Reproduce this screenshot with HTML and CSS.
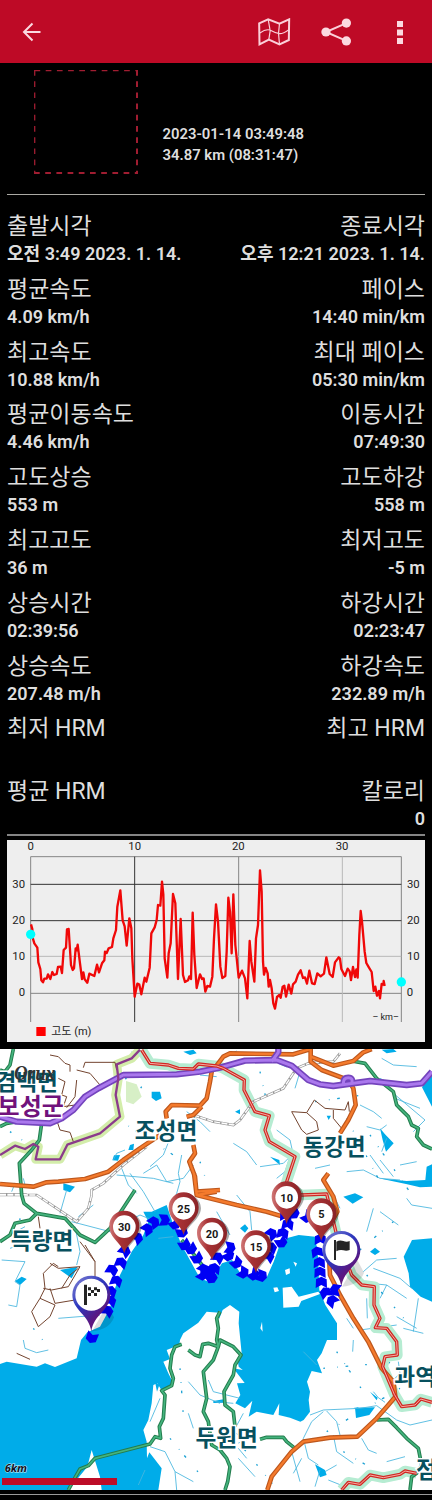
FILE: index.html
```html
<!DOCTYPE html>
<html lang="ko">
<head>
<meta charset="utf-8">
<title>Track statistics</title>
<link rel="stylesheet" href="styles.css">
</head>
<body>
<header class="bar">
  <svg class="back" viewBox="0 0 20 20"><path d="M18.5 10H2M10.500 1.500L2 10l8.500 8.500"/></svg>
  <div class="actions">
    <svg class="map-icon" viewBox="774 52 98 84"><path d="M777 68L804 56L838 69L867 56L866 118L838 131L806 117L778 131Z"/><path class="thin" d="M804 56L810 90L806 117M838 69L835 98L838 131M779 97Q800 82 814 90T838 99T866 87"/></svg>
    <svg class="share-icon" viewBox="962 52 94 84"><path d="M1039 67L977 94L1039 121"/><circle cx="977" cy="94" r="14"/><circle cx="1039" cy="67" r="14"/><circle cx="1039" cy="121" r="14"/></svg>
    <svg class="more-icon" viewBox="0 0 6 24"><path d="M0 1h6v6H0zM0 9.500h6v6H0zM0 18h6v6H0z"/></svg>
  </div>
</header>
<section class="summary">
  <svg class="thumb" viewBox="0 0 104 104"><path d="M.5 .7H103"/><path d="M.7 0V103.500"/><path class="heavy" d="M103 0V104"/><path class="heavy" d="M0 103H104"/></svg>
  <div class="meta"><div>2023-01-14 03:49:48</div><div>34.87 km (08:31:47)</div></div>
</section>
<main class="stats">
  <div class="row"><div><h2>출발시각</h2><p>오전 3:49 2023. 1. 14.</p></div><div><h2>종료시각</h2><p>오후 12:21 2023. 1. 14.</p></div></div>
  <div class="row"><div><h2>평균속도</h2><p>4.09 km/h</p></div><div><h2>페이스</h2><p>14:40 min/km</p></div></div>
  <div class="row"><div><h2>최고속도</h2><p>10.88 km/h</p></div><div><h2>최대 페이스</h2><p>05:30 min/km</p></div></div>
  <div class="row"><div><h2>평균이동속도</h2><p>4.46 km/h</p></div><div><h2>이동시간</h2><p>07:49:30</p></div></div>
  <div class="row"><div><h2>고도상승</h2><p>553 m</p></div><div><h2>고도하강</h2><p>558 m</p></div></div>
  <div class="row"><div><h2>최고고도</h2><p>36 m</p></div><div><h2>최저고도</h2><p>-5 m</p></div></div>
  <div class="row"><div><h2>상승시간</h2><p>02:39:56</p></div><div><h2>하강시간</h2><p>02:23:47</p></div></div>
  <div class="row"><div><h2>상승속도</h2><p>207.48 m/h</p></div><div><h2>하강속도</h2><p>232.89 m/h</p></div></div>
  <div class="row"><div><h2>최저 HRM</h2></div><div><h2>최고 HRM</h2></div></div>
  <div class="row"><div><h2>평균 HRM</h2></div><div><h2>칼로리</h2><p>0</p></div></div>
</main>
<svg class="chart" viewBox="21 15 1254 606">
  <g class="grid">
    <path class="soft" d="M92 65H1204M92 65V561M1204 65V561M92 475H1204M716 65V561"/>
    <path class="faint" d="M92 364H1204M1027 65V561"/>
    <path class="dark" d="M92 148H1204M92 257H1204M404 65V561"/>
  </g>
  <path class="elev" d="M93 268L97 282L97 305L103 325L112 338L115 382L121 402L124 436L129 442L133 431L140 431L144 418L151 432L157 411L162 420L170 417L174 396L182 395L186 414L191 345L198 338L201 283L206 282L213 390L218 405L222 400L227 340L230 346L233 329L240 385L246 432L250 412L254 433L262 443L268 416L283 423L291 389L297 412L306 385L313 376L315 350L320 354L326 340L336 336L340 310L348 285L352 215L361 166L368 256L374 274L380 332L388 250L394 280L397 370L404 485L412 446L418 449L424 478L434 428L439 440L449 398L454 295L464 277L470 255L474 210L481 212L486 140L490 178L494 370L502 428L506 355L512 325L519 177L526 205L534 432L542 252L549 420L555 441L564 436L568 424L573 432L578 233L583 360L590 459L600 418L606 432L611 430L616 470L622 453L630 455L637 425L642 310L648 208L654 260L661 395L667 429L676 423L680 350L685 188L690 230L695 355L700 178L706 330L716 428L726 407L735 430L742 490L749 318L754 380L763 440L768 310L774 270L780 106L785 170L789 380L792 419L797 399L803 415L806 455L810 435L815 460L820 505L825 521L831 486L838 480L842 488L848 455L853 452L858 485L866 449L874 476L879 448L887 440L894 419L902 406L909 429L915 427L921 446L928 407L936 445L944 447L952 415L962 424L972 416L979 367L989 417L998 426L1005 382L1016 367L1020 371L1024 402L1035 423L1043 401L1049 409L1053 435L1059 396L1065 426L1069 403L1073 428L1078 300L1082 228L1086 260L1094 350L1099 384L1107 398L1115 411L1121 468L1126 455L1131 482L1137 468L1140 490L1145 447L1150 449L1151 438L1154 453"/>
  <circle class="cyan" cx="92" cy="298" r="14"/><circle class="cyan" cx="1204" cy="441" r="14"/>
  <g class="ticks">
    <text x="92" y="45">0</text><text x="404" y="45">10</text><text x="715" y="45">20</text><text x="1026" y="45">30</text>
    <text x="56" y="160">30</text><text x="56" y="268">20</text><text x="56" y="376">10</text><text x="66" y="484">0</text>
    <text x="1240" y="160">30</text><text x="1240" y="268">20</text><text x="1240" y="376">10</text><text x="1230" y="484">0</text>
    <text class="unit" x="1157" y="555">– km–</text><text class="legend" x="214" y="601">고도 (m)</text>
  </g>
  <path class="key" d="M109 576h28v27h-28z"/>
</svg>
<svg class="map" viewBox="0 12 1296 1323" preserveAspectRatio="none">
  <defs>
    <linearGradient id="redpin" x1="0" x2="1"><stop offset="0" stop-color="#d17878"/><stop offset=".35" stop-color="#a83235"/><stop offset="1" stop-color="#892326"/></linearGradient>
    <linearGradient id="bluepin" x1="0" x2=".7" y1="0" y2="1"><stop offset="0" stop-color="#8586d4"/><stop offset=".45" stop-color="#2b36bd"/><stop offset=".8" stop-color="#5c167f"/></linearGradient>
    <g id="pin"><path d="M5 83C8 50 50 36 52 0A46 46 0 0 0 4 -44Z" fill="#0005"/><path d="M0 80C-8 47-45 36-45-3A45 45 0 0 1 45-3C45 36 8 47 0 80Z" fill="url(#redpin)"/><circle r="34" fill="#fff"/></g>
    <g id="bigpin"><path d="M2 110Q55 105 68 68L48 30Z" fill="#0002"/><path d="M0 111C-6 58-57 48-57 0A57 57 0 0 1 57 0C57 48 6 58 0 111Z" fill="url(#bluepin)"/><circle r="48" fill="#fff"/></g>
    <path id="ar" d="M-17 15L-16-11L0-19L16-11L17 15L0 6Z"/>
    <g id="r-green">
      <path d="M40 12L30 60L15 80L0 75M0 245L20 235L50 230M125 235L118 285L95 315L58 355L65 450L72 475L110 505L90 525L45 535L30 570L0 590M110 505L195 520L240 570L285 592L330 550L405 435"/>
      <path d="M1056 48L1095 55L1130 100L1180 140L1190 180L1200 190L1225 215L1235 240L1255 250L1250 275L1270 300L1296 312"/>
      <path d="M205 1335L225 1298L240 1272L265 1262L285 1240L450 1197L465 1175L482 1180L478 1145L490 1120L495 1050L485 1037L515 1022L520 1000L510 970L515 930L525 905L545 898M565 915L585 930L600 935L608 898L625 895L655 905L640 945L610 980L620 1060L610 1100L625 1130L635 1200L660 1215L680 1240L690 1265L683 1310L675 1335M655 905L650 885L655 850L650 820L660 800M655 905L660 885L700 905L723 930L705 960L700 990L672 1040L675 1080L700 1100L705 1145M780 1183L800 1177H850L860 1190L885 1210M1130 1125L1165 1123L1190 1148L1220 1180L1255 1210L1265 1260L1250 1285L1235 1295L1230 1335"/>
      <path d="M545 585L575 620L610 665"/>
    </g>
    <path id="r-orange" d="M0 417L100 425L140 412L175 410L255 402L325 380L370 345L420 310L480 270M500 220L497 200L515 180L600 182L620 160L630 110L635 80M560 215L580 210L605 185M580 300L585 325L568 350L585 395L590 450L650 440M582 385L590 450L710 480L800 500L850 515L875 495M590 440L660 435M640 75L670 35L690 25L880 28L932 12L932 50L965 75L1045 105L1060 130L1067 180L1045 225L1020 265M985 385L970 405L1000 455L1012 500L990 540M988 650L990 690L1020 750L1060 820L1105 890L1145 970L1180 1010L1186 1055L1165 1080L1130 1120L1072 1175L990 1178L910 1190L875 1220L815 1295L802 1335M932 35L1000 62L1060 48L1090 22L1115 12"/>
    <path id="r-purple" d="M0 215L50 230L150 235L185 220L220 195L255 155L295 130L370 90L530 88L600 80L660 68L735 47L830 45L875 62L925 105L960 118L1000 123L1110 108L1220 120L1265 115L1296 80M815 50L835 22V12M1030 115Q1030 98 1045 98T1055 115"/>
    <path id="r-red" d="M425 15L450 55L505 60L535 70L580 72L595 57L650 63L670 70L733 105L732 135L765 200L808 212L795 255L808 290L885 335L855 425L905 450L980 447L1010 570L1055 690L1085 720L1123 725L1122 780L1140 820L1126 848L1160 850L1190 890L1192 930L1155 935L1148 965L1183 1048L1205 1085L1245 1080L1262 1062L1296 1072M1025 1335L1045 1312L1080 1318L1110 1290L1150 1298L1200 1288L1215 1278L1250 1285"/>
  </defs>
  <path fill="#fff" d="M0 12H1296V1335H0z"/>
  <g class="water">
    <path d="M0 957L20 950L110 965L135 955L165 966L230 940L243 885L262 862L300 845L330 790L345 730L360 690L395 620L430 570L445 530L430 500L455 500L500 480L520 540L545 600L575 655L600 700L630 712L666 655L696 645L721 685L766 705L801 695L821 650L841 595L865 578L896 570L946 575L954 635L958 735L976 780L1011 835L1011 885L981 885L965 925L951 945L966 985L935 978L921 1010L930 1040L926 1065L930 1100L911 1125L901 1130L870 1118L836 1110L838 1075L820 1110L770 1100L746 1115L757 1067L735 1090L706 1075L721 1050L711 1015L734 1014L700 970L728 975L716 965L712 938L726 935L716 835L718 800L690 780L668 795L656 825L658 803L620 800L595 833L550 865L540 885L538 900L500 915L510 942L490 950L505 985L520 1015L484 1035L472 1015L460 1020L455 1075L445 1125L430 1155L440 1190L441 1240L448 1222L485 1270L475 1335H305L300 1295L275 1215L262 1265L205 1335H0Z"/>
    <path d="M1236 585L1296 580V770L1262 755L1230 725L1226 685L1211 635ZM1266 127L1296 80V185ZM1136 400L1220 408L1276 405L1280 365L1296 358V425L1260 427L1218 417ZM1140 250L1155 268L1181 295L1158 320L1148 285ZM455 140L480 140L485 160L468 168L455 158ZM190 415L225 425L210 442L190 435ZM342 331L360 330L354 347L337 346ZM1060 1089L1075 1087V1094ZM1065 1088L1125 1087L1108 1110L1068 1119ZM1030 455L1065 445L1090 457L1058 476ZM1110 620L1125 608L1140 620L1125 630ZM720 550L735 538L745 550L735 563ZM180 675L233 665L215 700ZM45 708L65 695L80 702L60 720ZM550 20L580 14L590 25L570 30ZM1145 14L1180 12L1190 20L1160 25ZM945 1258L975 1275L980 1290L960 1297ZM810 335L838 345L840 360ZM390 300L402 296L400 315L385 315ZM705 200L720 193V208ZM980 212L993 212L986 225ZM465 1010L478 1020L471 1040ZM1110 1040L1133 1058L1130 1066ZM640 1068L675 1062V1074L640 1074Z"/>
  </g>
  <g class="stream">
    <path d="M350 390L460 400L520 415M365 370L385 420L410 445M390 385L430 440L465 500M430 385L470 360L500 410L550 400L580 360M545 330L535 385L540 410L530 445L515 485M512 275L490 330L450 365M375 315L350 325L340 345M560 200L600 230L630 260M600 90L650 95M15 420L45 415L35 440M70 400L75 420M30 570L75 545M30 610L60 600M5 645L75 650L45 710L60 720L50 785L25 780M380 530L420 510L470 530M215 530L330 560L360 580L375 610M175 820L300 810M225 545L240 620L230 660M70 885L75 910L110 923L145 915M280 480L235 515M180 505L200 435M395 20L400 30M475 580L520 575"/>
    <path d="M665 40L710 18M835 55L860 66M900 80L885 130M830 255L870 285L880 330M700 295L740 320L770 360M780 365L850 355L870 335L850 395M855 380L830 400M1080 180L1120 200L1145 220M1090 375L1140 400L1200 405M1040 380L1090 375M1110 330L1150 385M1140 345L1180 395M1200 360L1250 350M1180 145L1275 225L1240 260M1185 160L1260 190M1145 40L1180 60L1250 65M1140 100L1160 110M945 370L990 360M1100 245L1140 255L1160 240M1160 280L1145 320"/>
    <path d="M1120 490L1100 560M1140 500L1195 540M1090 680L1130 645L1190 640M1110 715L1160 720L1220 760M1160 720L1140 760M1120 670L1200 700L1235 730M970 475L1000 450L1020 490M710 450L750 500L755 555M1255 760L1240 860M1080 855L1190 840M1190 815L1250 850M1040 820L1060 850M1100 760L1102 820M1210 850L1270 865M1220 460L1235 480L1296 490M650 500L690 570"/>
    <path d="M565 1010L600 1050L660 1075M625 1005L640 1040L720 1060M565 1105L580 1150M450 1205L495 1220L525 1280L530 1335M525 1280L580 1310M435 1275L415 1320M480 1060L450 1130M730 1105L700 1160L740 1185M645 1070L700 1075M930 1110L970 1095L1080 1090L1130 1082M1130 1082L1190 1125L1230 1140L1296 1125M1120 1040L1135 1058L1155 1072M970 1100L935 1130L910 1180L925 1240L955 1260M980 1098L1010 1130L1020 1170M1000 1170L1010 1220L1060 1255M1085 1180L1105 1215L1130 1225M875 1220L900 1310M905 1240L880 1285M960 1275L945 1325M975 1280L1010 1260M715 1240L765 1295M715 1210L740 1240M1160 1250L1215 1235M1060 885L1058 920M910 920L950 960M1195 950L1200 985L1185 1000M985 1305L1035 1325"/>
  </g>
  <g class="specks"><path d="M380 100L330 120M425 125L400 160M30 260L110 315M500 60L510 75M350 220L520 330M600 350L620 410M780 80L800 170M945 170L1090 150M1040 220L1150 430M1110 270L1250 470M1180 530L1050 640M1100 690L1220 830M1010 920L1090 1040M970 970L1200 950M540 970L550 1110M510 1180L610 1300M690 1160L820 1320M1030 1220L1150 1290M980 1160L1200 1030M60 520L50 640M100 850L140 900"/></g>
  <path fill="#fff" d="M848 728L875 725L896 755L955 740L960 747L904 768L896 785L850 788ZM820 728L832 727L837 738L824 742ZM855 675L869 670L870 685L858 690ZM880 650L891 655L887 665ZM781 850L786 830L788 860Z"/>
  <path fill="#d7efc6" d="M378 108L410 118L425 155L400 178L378 170Z"/>
  <g class="halo">
    <path class="lime" d="M420 14L395 40L350 58L355 100L347 150L360 215L300 265L202 299L180 343H107L115 305L100 297L75 312L45 302L0 330"/>
    <use href="#r-red" class="mint"/>
  </g>
  <g class="trail"><path d="M150 30L175 35L195 55L210 60L210 80M250 68L255 52L345 52L350 75M175 100L195 110L185 150L200 155L190 185L225 180M230 75L270 85L300 120M230 105L225 155L200 188M170 225L180 255L210 262L220 290M875 200L920 203L943 165L975 190L1035 195L1045 170L1048 200M875 200L905 255L920 268L955 255L950 230L920 203M1000 195L1000 220L1025 250M115 515L120 550M255 600L285 650V700M240 590L285 650M175 665L160 655L130 685L135 730L120 760L95 800L115 845L150 815L165 780L120 760M150 655L175 670L240 665L205 725L155 735L130 730M150 730L165 775L225 765M235 670L210 690L185 730M50 925L90 943"/></g>
  <g class="rail"><path id="rail" d="M275 450V435L310 415L370 360L440 305M580 210L640 230L700 240L720 225L760 170L850 130L890 70L925 55L1000 50L1020 25M0 448H80M0 450L110 450L230 530L265 490L275 450"/></g>
  <use href="#rail" class="rail-core"/>
  <use href="#r-green" class="green"/><use href="#r-green" class="green core"/>
  <use href="#r-orange" class="orange"/><use href="#r-orange" class="orange core"/>
  <use href="#r-purple" class="purple"/><use href="#r-purple" class="purple core"/>
  <path class="boundary" d="M420 14L395 40L350 58L355 100L347 150L360 215L300 265L202 299L180 343H107L115 305L100 297L75 312L45 302L0 330"/>
  <use href="#r-red" class="red"/><use href="#r-red" class="red core"/>
  <g class="arrows">
    <use href="#ar" transform="translate(276 876) rotate(200)"/><use href="#ar" transform="translate(321 800) rotate(30)"/><use href="#ar" transform="translate(330 770) rotate(20)"/><use href="#ar" transform="translate(331 741) rotate(20)"/><use href="#ar" transform="translate(348 710) rotate(20)"/><use href="#ar" transform="translate(335 677) rotate(30)"/><use href="#ar" transform="translate(362 655) rotate(20)"/><use href="#ar" transform="translate(373 620) rotate(40)"/><use href="#ar" transform="translate(410 580) rotate(45)"/><use href="#ar" transform="translate(440 554) rotate(55)"/><use href="#ar" transform="translate(460 533) rotate(55)"/><use href="#ar" transform="translate(491 525) rotate(90)"/><use href="#ar" transform="translate(524 535) rotate(140)"/><use href="#ar" transform="translate(545 560) rotate(160)"/><use href="#ar" transform="translate(553 598) rotate(150)"/><use href="#ar" transform="translate(572 610) rotate(150)"/><use href="#ar" transform="translate(590 638) rotate(150)"/><use href="#ar" transform="translate(610 675) rotate(50)"/><use href="#ar" transform="translate(606 688) rotate(120)"/><use href="#ar" transform="translate(628 680) rotate(90)"/><use href="#ar" transform="translate(634 697) rotate(150)"/><use href="#ar" transform="translate(642 673) rotate(10)"/><use href="#ar" transform="translate(652 640) rotate(30)"/><use href="#ar" transform="translate(688 608) rotate(100)"/><use href="#ar" transform="translate(684 630) rotate(130)"/><use href="#ar" transform="translate(708 652) rotate(135)"/><use href="#ar" transform="translate(728 682) rotate(120)"/><use href="#ar" transform="translate(760 688) rotate(130)"/><use href="#ar" transform="translate(783 692) rotate(110)"/><use href="#ar" transform="translate(804 636) rotate(30)"/><use href="#ar" transform="translate(812 610) rotate(25)"/><use href="#ar" transform="translate(813 568) rotate(50)"/><use href="#ar" transform="translate(843 590) rotate(150)"/><use href="#ar" transform="translate(848 567) rotate(10)"/><use href="#ar" transform="translate(863 540) rotate(10)"/><use href="#ar" transform="translate(857 513)"/><use href="#ar" transform="translate(880 504) rotate(90)"/><use href="#ar" transform="translate(920 515) rotate(130)"/><use href="#ar" transform="translate(961 585)"/><use href="#ar" transform="translate(952 623) rotate(-10)"/><use href="#ar" transform="translate(958 655)"/><use href="#ar" transform="translate(960 684)"/><use href="#ar" transform="translate(964 714)"/><use href="#ar" transform="translate(978 745) rotate(-25)"/><use href="#ar" transform="translate(998 769) rotate(-50)"/><use href="#ar" transform="translate(1008 735) rotate(-80)"/>
  </g>
  <g class="places">
    <text x="80" y="136">겸백면</text><text class="county" x="92" y="211">보성군</text><text x="498" y="282">조성면</text><text x="1003" y="329">동강면</text><text x="126" y="612">득량면</text><text x="680" y="1203">두원면</text><text x="1183" y="1021" class="start">과역</text><text x="1248" y="1299" class="start">점</text>
  </g>
  <text class="orux" x="42" y="106" textLength="124" lengthAdjust="spacingAndGlyphs">Orux</text>
  <g class="pins">
    <use href="#pin" x="373" y="545"/><text x="373" y="557">30</text><use href="#pin" x="551" y="490"/><text x="551" y="503">25</text><use href="#pin" x="636" y="566"/><text x="636" y="578">20</text><use href="#pin" x="768" y="604"/><text x="768" y="617">15</text><use href="#pin" x="860" y="457"/><text x="860" y="470">10</text><use href="#pin" x="964" y="508"/><text x="964" y="520">5</text>
    <use href="#bigpin" x="1024" y="615"/><path class="flag" d="M1002 585h6v60h-6zM1009 590Q1020 584 1030 588T1049 588V615Q1040 619 1030 616T1009 619z"/>
    <use href="#bigpin" x="274" y="749"/><path class="flag" d="M252 719h9v61h-9zM264 727h9v9h-9zM282 727h9v9h-9zM273 735h9v9h-9zM291 732h9v9h-9zM264 744h9v9h-9zM282 744h9v9h-9z"/>
  </g>
  <text class="scale" x="14" y="1280">6km</text><path fill="#bd0c27" d="M6 1299h345v21H6z"/>
</svg>
<div class="foot"></div>
</body>
</html>
```
FILE: styles.css
```css
* { box-sizing: border-box; }
body { margin: 0; width: 432px; height: 1500px; background: #000; color: #dedede; font-family: Roboto, "Noto Sans CJK KR", sans-serif; overflow: hidden; display: flex; flex-direction: column; }
svg { display: block; flex: none; }
.bar { height: 63px; flex: none; background: #be0a26; display: flex; justify-content: space-between; align-items: center; padding: 0 29px 0 22px; }
.back { width: 20px; height: 20px; fill: none; stroke: #fbd9e0; stroke-width: 2; }
.actions { display: flex; align-items: center; }
.map-icon { width: 33px; height: 28px; fill: none; stroke: #fbd0d9; stroke-width: 6; }
.map-icon .thin { stroke-width: 3.5; }
.share-icon { width: 31px; height: 28px; margin: 0 45px 0 30px; fill: #fbd9e0; }
.share-icon path { fill: none; stroke: #fbd0d9; stroke-width: 6; }
.more-icon { width: 6px; height: 24px; fill: #fbd9e0; }
.summary { height: 132px; flex: none; margin: 0 7px; border-bottom: 1px solid #aaa9a4; display: flex; padding: 7px 0 0 27px; }
.thumb { width: 104px; height: 104px; fill: none; stroke: #a01d31; stroke-width: 1.3; stroke-dasharray: 5.7 5.5; }
.thumb .heavy { stroke-width: 2; }
.meta { padding: 54px 0 0 24.500px; font-size: 14.850px; line-height: 20.500px; font-weight: 600; white-space: nowrap; }
.stats { height: 641px; flex: none; margin: 0 7px; padding-top: 17px; border-bottom: 2px solid #858585; display: flex; flex-direction: column; gap: 6.800px; }
.row { height: 56px; flex: none; display: flex; justify-content: space-between; white-space: nowrap; }
.row > div:last-child { text-align: right; }
.row h2 { margin: 0; height: 29px; line-height: 30px; font-size: 23px; font-weight: 400; }
.row p { margin: 0; height: 26px; line-height: 26px; font-size: 18.050px; font-weight: 600; }
.chart { width: 418px; height: 202px; margin: 4px 7px 7px; background: #eee; }
.grid { fill: none; stroke-width: 3; }
.soft { stroke: #858585; }
.faint { stroke: #b8b8b8; }
.dark { stroke: #333; }
.elev { fill: none; stroke: #f00808; stroke-width: 7; stroke-linejoin: round; }
.cyan { fill: #0ff; }
.key { fill: #f00; }
.ticks { font-size: 34px; fill: #222; text-anchor: middle; }
.ticks .unit { font-size: 27px; }
.ticks .legend { font-size: 33px; }
.map { width: 432px; height: 441px; }
.water { fill: #00ace9; }
.stream { fill: none; stroke: #48b6df; stroke-width: 2.600; }
.specks { fill: none; stroke: #1da2d4; stroke-width: 4; stroke-dasharray: 5 37 2 23 8 51; }
.halo { fill: none; stroke-linejoin: round; }
.lime { stroke: #d3edaa; stroke-width: 27; }
.mint { stroke: #b6ecd2; stroke-width: 32; }
.trail { fill: none; stroke: #73442f; stroke-width: 3; }
.rail { fill: none; stroke: #999; stroke-width: 8; }
.rail-core { fill: none; stroke: #fff; stroke-width: 4; stroke-dasharray: 18 4; }
.green, .orange, .purple, .boundary, .red { fill: none; stroke-linejoin: round; }
.green { stroke: #237c4d; stroke-width: 11; }
.green.core { stroke: #44b47e; stroke-width: 5; }
.orange { stroke: #bd571d; stroke-width: 14; }
.orange.core { stroke: #f47a2c; stroke-width: 7; }
.purple { stroke: #7444bd; stroke-width: 19; }
.purple.core { stroke: #aa78ed; stroke-width: 9; }
.boundary { stroke: #8b3b8b; stroke-width: 7; }
.red { stroke: #d02824; stroke-width: 10; }
.red.core { stroke: #ffc7bb; stroke-width: 2.500; }
.arrows { fill: #0000f5; }
.places { font: 700 68px "Noto Sans CJK KR", sans-serif; fill: #07505e; text-anchor: middle; stroke: #fff; stroke-width: 9; paint-order: stroke; }
.places .county { fill: #71127b; font-size: 72px; }
.places .start { text-anchor: start; }
.orux { font: italic 700 62px "Liberation Serif", serif; fill: #333; }
.pins text { font-size: 33px; font-weight: 700; fill: #181818; text-anchor: middle; }
.flag { fill: #252525; }
.scale { font: italic 700 33px "Open Sans", sans-serif; fill: #112; stroke: #cdeefa; stroke-width: 3; paint-order: stroke; }
.foot { height: 5px; flex: none; border-bottom: 1px solid #9a9a9a; }
```
